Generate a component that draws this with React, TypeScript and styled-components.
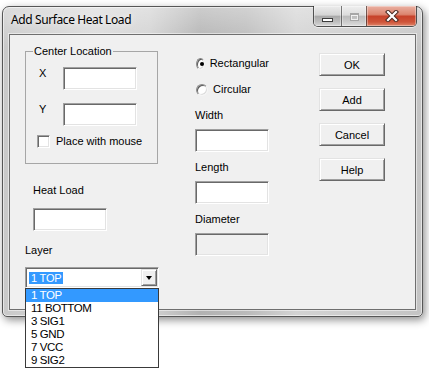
import React from "react";
import styled, { createGlobalStyle } from "styled-components";

const GlobalStyle = createGlobalStyle`
  html, body {
    margin: 0;
    padding: 0;
    background: #ffffff;
  }
  body {
    font-family: "Liberation Sans", Arial, sans-serif;
    font-size: 11px;
    color: #000;
  }
`;

const Page = styled.div`
  width: 429px;
  height: 374px;
  box-sizing: border-box;
  padding: 6px 0 0 2px;
  overflow: hidden;
`;

const Window = styled.div`
  width: 421px;
  height: 311px;
  box-sizing: border-box;
  display: flex;
  flex-direction: column;
  padding: 0 6px 6px 6px;
  border: 1px solid #565656;
  border-radius: 7px 7px 5px 5px;
  background: linear-gradient(180deg, rgba(255, 255, 255, 0.35), rgba(255, 255, 255, 0) 40px),
    linear-gradient(90deg, #c9c9c9 0%, #dadada 22%, #d2d2d2 35%, #b2b2b2 47%, #bababa 58%, #d3d3d3 70%, #c4c4c4 100%);
  box-shadow: 2px 3px 8px rgba(0, 0, 0, 0.45), inset 0 0 0 1px rgba(255, 255, 255, 0.55);
`;

const TitleBar = styled.div`
  height: 27px;
  display: flex;
  justify-content: space-between;
  align-items: flex-start;
`;

const Title = styled.div`
  margin: 5px 0 0 2px;
  font-family: "Noto Sans", "Liberation Sans", sans-serif;
  font-size: 12px;
  letter-spacing: -0.4px;
  line-height: 16px;
  color: #000;
  text-shadow: 0 0 6px rgba(255, 255, 255, 0.9);
`;

const CaptionGroup = styled.div`
  display: flex;
  height: 20px;
  margin: -1px -1px 0 0;
  border: 1px solid rgba(45, 45, 45, 0.8);
  border-top: none;
  border-radius: 0 0 5px 5px;
  overflow: hidden;
  box-shadow: 0 1px 0 rgba(255, 255, 255, 0.6);
`;

const captionBg = {
  min: "linear-gradient(180deg, #ececec 0%, #d4d4d4 45%, #a9a9a9 52%, #bfbfbf 80%, #d8d8d8 100%)",
  max: "linear-gradient(180deg, #efefef 0%, #dcdcdc 45%, #bcbcbc 52%, #cccccc 80%, #dddddd 100%)",
  close: "linear-gradient(180deg, #eab0a2 0%, #dc8670 42%, #c7432b 52%, #cf553a 80%, #e0866a 100%)",
};

const CaptionButton = styled.div<{ $kind: "min" | "max" | "close"; $w: number }>`
  width: ${(p) => p.$w}px;
  height: 100%;
  display: flex;
  align-items: center;
  justify-content: center;
  background: ${(p) => captionBg[p.$kind]};
  box-shadow: inset 0 0 0 1px rgba(255, 255, 255, 0.35);
  & + & {
    border-left: 1px solid rgba(55, 55, 55, 0.65);
  }
`;

const MinGlyph = styled.div`
  width: 9px;
  height: 2px;
  margin-top: 7px;
  background: #fff;
  border: 1px solid #3c3c3c;
`;

const MaxGlyph = styled.div`
  width: 7px;
  height: 5px;
  margin-top: 1px;
  border: 1px solid #a6a6a6;
  border-top-width: 2px;
  box-shadow: inset 0 0 0 1px rgba(255, 255, 255, 0.7);
`;

const Client = styled.div`
  flex: 1;
  display: flex;
  padding-left: 15px;
  background: #f0f0f0;
  border: 1px solid #6f6f6f;
  box-shadow: 0 0 0 1px rgba(255, 255, 255, 0.5);
`;

const LeftColumn = styled.div`
  width: 134px;
  padding-top: 10px;
  display: flex;
  flex-direction: column;
  align-items: flex-start;
`;

const GroupBox = styled.fieldset`
  margin: 0;
  width: 133px;
  box-sizing: border-box;
  min-inline-size: auto;
  padding: 9px 0 15px 11px;
  border: 1px solid #a6a6a6;
`;

const GroupTitle = styled.legend`
  margin-left: -4px;
  padding: 0 1px;
  line-height: 13px;
`;

const CoordRow = styled.div`
  display: grid;
  grid-template-columns: 24px 74px;
  align-items: start;
  padding-left: 2px;
  & + & {
    margin-top: 13px;
  }
`;

const Text = styled.div<{ $top?: number; $indent?: number }>`
  line-height: 13px;
  white-space: nowrap;
  margin-top: ${(p) => p.$top ?? 0}px;
  margin-left: ${(p) => p.$indent ?? 0}px;
`;

const TextBox = styled.input<{ $top?: number; $indent?: number }>`
  display: block;
  width: 74px;
  height: 23px;
  margin: ${(p) => p.$top ?? 0}px 0 0 ${(p) => p.$indent ?? 0}px;
  padding: 0 3px;
  box-sizing: border-box;
  font: inherit;
  background: #fff;
  border: 1px solid;
  border-color: #a0a0a0 #ffffff #ffffff #a0a0a0;
  box-shadow: inset 1px 1px #696969, inset -1px -1px #e3e3e3;
  outline: none;
  &:disabled {
    background: #f0f0f0;
  }
`;

const CheckRow = styled.div`
  display: flex;
  align-items: center;
  gap: 6px;
  margin-top: 9px;
`;

const CheckBox = styled.div`
  width: 13px;
  height: 13px;
  box-sizing: border-box;
  background: #fff;
  border: 1px solid;
  border-color: #a0a0a0 #ffffff #ffffff #a0a0a0;
  box-shadow: inset 1px 1px #696969, inset -1px -1px #e3e3e3;
`;

const ComboWrap = styled.div`
  position: relative;
  margin-top: 10px;
`;

const Combo = styled.div`
  width: 134px;
  height: 21px;
  box-sizing: border-box;
  display: flex;
  align-items: center;
  justify-content: space-between;
  padding: 1px 1px 1px 3px;
  background: #fff;
  border: 1px solid;
  border-color: #a0a0a0 #ffffff #ffffff #a0a0a0;
  box-shadow: inset 1px 1px #696969, inset -1px -1px #e3e3e3;
`;

const Selected = styled.span`
  padding: 0 2px;
  line-height: 12px;
  letter-spacing: -0.2px;
  background: #3399ff;
  color: #fff;
`;

const DropButton = styled.div`
  width: 16px;
  height: 17px;
  box-sizing: border-box;
  display: flex;
  align-items: center;
  justify-content: center;
  background: #f0f0f0;
  border: 1px solid;
  border-color: #e3e3e3 #696969 #696969 #e3e3e3;
  box-shadow: inset 1px 1px #fff, inset -1px -1px #a0a0a0;
`;

const Arrow = styled.div`
  width: 0;
  height: 0;
  border-left: 3.5px solid transparent;
  border-right: 3.5px solid transparent;
  border-top: 4px solid #000;
  margin-top: 1px;
`;

const DropList = styled.ul`
  position: absolute;
  top: 100%;
  left: 0;
  z-index: 10;
  width: 134px;
  box-sizing: border-box;
  margin: 0;
  padding: 0;
  list-style: none;
  background: #fff;
  border: 1px solid #3a3a3a;
`;

const DropItem = styled.li<{ $active?: boolean }>`
  height: 13px;
  line-height: 13px;
  padding-left: 5px;
  font-size: 11.5px;
  letter-spacing: -0.4px;
  background: ${(p) => (p.$active ? "#3399ff" : "transparent")};
  color: ${(p) => (p.$active ? "#fff" : "#000")};
`;

const MidColumn = styled.div`
  width: 74px;
  margin-left: 36px;
  padding-top: 22px;
  display: flex;
  flex-direction: column;
`;

const RadioRow = styled.div`
  display: flex;
  align-items: center;
  gap: 5px;
  height: 13px;
  padding-left: 1px;
  & + & {
    margin-top: 13px;
  }
`;

const Radio = styled.div<{ $checked?: boolean }>`
  position: relative;
  width: 12px;
  height: 12px;
  box-sizing: border-box;
  border-radius: 50%;
  background: #fff;
  border: 1px solid;
  border-color: #8a8a8a #f4f4f4 #f4f4f4 #8a8a8a;
  box-shadow: inset 1px 1px #5a5a5a, inset -1px -1px #dcdcdc;
  &::after {
    content: "";
    display: ${(p) => (p.$checked ? "block" : "none")};
    position: absolute;
    left: 3px;
    top: 3px;
    width: 4px;
    height: 4px;
    border-radius: 50%;
    background: #000;
  }
`;

const Field = styled.div<{ $top: number }>`
  margin-top: ${(p) => p.$top}px;
`;

const ButtonColumn = styled.div`
  margin-left: 50px;
  padding-top: 18px;
  display: flex;
  flex-direction: column;
  gap: 12px;
`;

const DialogButton = styled.div`
  width: 66px;
  height: 23px;
  box-sizing: border-box;
  display: flex;
  align-items: center;
  justify-content: center;
  background: #f0f0f0;
  border: 1px solid;
  border-color: #e3e3e3 #696969 #696969 #e3e3e3;
  box-shadow: inset 1px 1px #fff, inset -1px -1px #a0a0a0;
`;

const layers = ["1 TOP", "11 BOTTOM", "3 SIG1", "5 GND", "7 VCC", "9 SIG2"];

const CloseGlyph = () => (
  <svg width="14" height="12" viewBox="0 0 14 12">
    <path d="M3 2 L11 10 M11 2 L3 10" stroke="#4a2a22" strokeWidth="4.2" strokeLinecap="square" />
    <path d="M3 2 L11 10 M11 2 L3 10" stroke="#ffffff" strokeWidth="2.2" strokeLinecap="square" />
  </svg>
);

const App = () => {
  return (
    <Page>
      <GlobalStyle />
      <Window>
        <TitleBar>
          <Title>Add Surface Heat Load</Title>
          <CaptionGroup>
            <CaptionButton $kind="min" $w={27}>
              <MinGlyph />
            </CaptionButton>
            <CaptionButton $kind="max" $w={24}>
              <MaxGlyph />
            </CaptionButton>
            <CaptionButton $kind="close" $w={49}>
              <CloseGlyph />
            </CaptionButton>
          </CaptionGroup>
        </TitleBar>
        <Client>
          <LeftColumn>
            <GroupBox>
              <GroupTitle>Center Location</GroupTitle>
              <CoordRow>
                <Text $top={0}>X</Text>
                <TextBox readOnly />
              </CoordRow>
              <CoordRow>
                <Text $top={0}>Y</Text>
                <TextBox readOnly />
              </CoordRow>
              <CheckRow>
                <CheckBox />
                <Text>Place with mouse</Text>
              </CheckRow>
            </GroupBox>
            <Text $top={20} $indent={8}>
              Heat Load
            </Text>
            <TextBox readOnly $top={11} $indent={8} />
            <Text $top={13}>Layer</Text>
            <ComboWrap>
              <Combo>
                <Selected>1 TOP</Selected>
                <DropButton>
                  <Arrow />
                </DropButton>
              </Combo>
              <DropList>
                {layers.map((l, i) => (
                  <DropItem key={l} $active={i === 0}>
                    {l}
                  </DropItem>
                ))}
              </DropList>
            </ComboWrap>
          </LeftColumn>
          <MidColumn>
            <RadioRow>
              <Radio $checked />
              <Text>Rectangular</Text>
            </RadioRow>
            <RadioRow>
              <Radio />
              <Text>Circular</Text>
            </RadioRow>
            <Field $top={13}>
              <Text>Width</Text>
              <TextBox readOnly $top={7} />
            </Field>
            <Field $top={9}>
              <Text>Length</Text>
              <TextBox readOnly $top={7} />
            </Field>
            <Field $top={9}>
              <Text>Diameter</Text>
              <TextBox disabled $top={7} />
            </Field>
          </MidColumn>
          <ButtonColumn>
            <DialogButton>OK</DialogButton>
            <DialogButton>Add</DialogButton>
            <DialogButton>Cancel</DialogButton>
            <DialogButton>Help</DialogButton>
          </ButtonColumn>
        </Client>
      </Window>
    </Page>
  );
};

export default App;
